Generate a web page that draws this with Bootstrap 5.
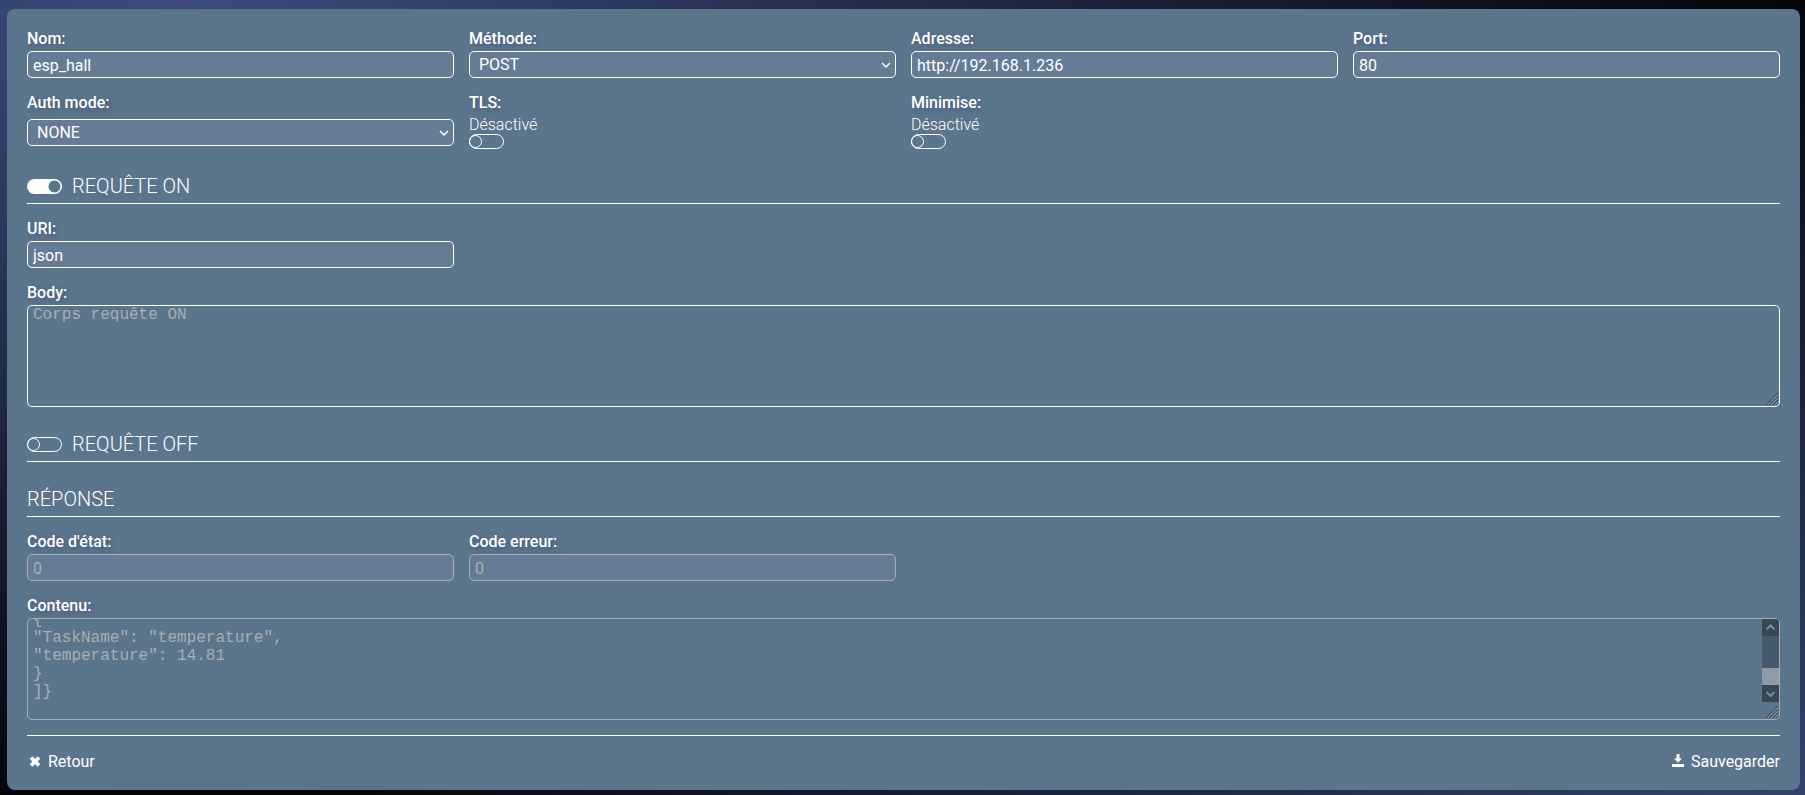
<!DOCTYPE html>
<html lang="fr">
<head>
<meta charset="utf-8">
<meta name="viewport" content="width=device-width, initial-scale=1">
<title>esp_hall</title>
<link href="https://cdn.jsdelivr.net/npm/bootstrap@5.3.0/dist/css/bootstrap.min.css" rel="stylesheet">
<style>
  :root {
    --panel: #5b758d;
    --field: #667b96;
    --muted: #aaaeb1;
  }
  body {
    min-height: 100vh;
    padding: 9px 5px 5px 7px;
    color: #fff;
    font-family: Roboto, "Liberation Sans", sans-serif;
    font-size: 16px;
    font-weight: 300;
    line-height: 18px;
    background:
      radial-gradient(ellipse 1600px 800px at 180px 0, #3c4c7e, transparent),
      radial-gradient(ellipse 1500px 800px at 1800px 100%, #34426d, transparent),
      #040508;
  }
  .panel { background: var(--panel); border-radius: 8px; padding: 20px 20px 17px; }
  .fields { --bs-gutter-x: 15px; --bs-gutter-y: 15px; }
  .field-label {
    display: block;
    line-height: 20px;
    padding-bottom: 2px;
    font-weight: 500;
    text-shadow: 2px 2px 4px rgba(60, 70, 110, .5);
  }
  .field-box {
    display: block;
    width: 100%;
    height: 27px;
    padding: 1px 5px 0;
    color: #fff;
    background-color: var(--field);
    border: 1px solid #fff;
    border-radius: 5px;
    font-weight: 400;
  }
  select.field-box {
    appearance: none;
    padding: 1px 24px 0 9px;
    background-image: url("data:image/svg+xml,%3Csvg xmlns='http://www.w3.org/2000/svg' viewBox='0 0 10 10'%3E%3Cpath d='M1 3l4 4 4-4' fill='none' stroke='white' stroke-width='1.5'/%3E%3C/svg%3E");
    background-repeat: no-repeat;
    background-position: right 4px center;
    background-size: 10px 10px;
  }
  textarea.field-box {
    height: 102px;
    padding: 0 5px;
    background-color: transparent;
    font-family: "Liberation Mono", monospace;
    line-height: 18px;
    resize: vertical;
    scrollbar-width: none;
  }
  .field-box::placeholder { color: var(--muted); opacity: 1; }
  .field-box:disabled { color: var(--muted); border-color: var(--muted); opacity: 1; }
  textarea.field-box::-webkit-resizer {
    background: center / 100% 100% no-repeat url("data:image/svg+xml,%3Csvg xmlns='http://www.w3.org/2000/svg' viewBox='0 0 17 17'%3E%3Cpath d='M2 16L16 2M6 16L16 6M10 16l6-6M14 16l2-2' stroke='%232f3d4c'/%3E%3Cpath d='M4 16L16 4M8 16l8-8M12 16l4-4' stroke='%2391a3b4'/%3E%3C/svg%3E");
  }
  /* Scroll bar laid over the right edge of the response, above the resize grip */
  .scroll-rail {
    position: absolute;
    top: 1px;
    right: 1px;
    bottom: 18px;
    width: 17px;
    background: #46596d;
    border-top-right-radius: 4px;
    overflow: hidden;
    pointer-events: none;
  }
  .scroll-rail svg { display: block; flex: none; background: #3a4656; }
  .scroll-thumb { height: 17px; background: #909ba7; }
  .state { padding-top: 1px; }
  .toggle {
    appearance: none;
    display: block;
    flex: none;
    width: 35px;
    height: 15px;
    margin: 0;
    background: center / 100% 100% no-repeat url("data:image/svg+xml,%3Csvg xmlns='http://www.w3.org/2000/svg' viewBox='0 0 35 15' fill='none' stroke='white'%3E%3Crect x='.5' y='.5' width='34' height='14' rx='7'/%3E%3Ccircle cx='6.5' cy='7.5' r='6'/%3E%3C/svg%3E");
  }
  .toggle:checked {
    background-image: url("data:image/svg+xml,%3Csvg xmlns='http://www.w3.org/2000/svg' viewBox='0 0 35 15'%3E%3Crect width='35' height='15' rx='7.5' fill='white'/%3E%3Ccircle cx='27.5' cy='7.5' r='6' fill='%235b758d'/%3E%3C/svg%3E");
  }
  .section-head {
    margin: 25px 0 15px;
    padding-bottom: 5px;
    border-bottom: 1px solid #fff;
    font-size: 20px;
    font-weight: 300;
    line-height: 24px;
  }
  .section-head .toggle { margin: 0 10px 0 0; }
  .actions { margin-top: 15px; padding-top: 15px; border-top: 1px solid #fff; }
  .action {
    gap: 5px;
    padding: 0;
    border: 0;
    background: none;
    color: #fff;
    line-height: 22px;
    font-weight: 400;
  }
</style>
</head>
<body>
<form class="panel" onsubmit="return false">
  <div class="row row-cols-4 fields">
    <div class="col">
      <label class="field-label" for="nom">Nom:</label>
      <input class="field-box" id="nom" type="text" value="esp_hall">
    </div>
    <div class="col">
      <label class="field-label" for="methode">Méthode:</label>
      <select class="field-box" id="methode"><option>GET</option><option selected>POST</option><option>PUT</option></select>
    </div>
    <div class="col">
      <label class="field-label" for="adresse">Adresse:</label>
      <input class="field-box" id="adresse" type="text" value="http://192.168.1.236">
    </div>
    <div class="col">
      <label class="field-label" for="port">Port:</label>
      <input class="field-box" id="port" type="text" value="80">
    </div>
    <div class="col">
      <label class="field-label mb-1" for="auth">Auth mode:</label>
      <select class="field-box" id="auth"><option selected>NONE</option><option>BASIC</option></select>
    </div>
    <div class="col">
      <label class="field-label" for="tls">TLS:</label>
      <div class="state">Désactivé</div>
      <input class="toggle" id="tls" type="checkbox" role="switch">
    </div>
    <div class="col">
      <label class="field-label" for="minimise">Minimise:</label>
      <div class="state">Désactivé</div>
      <input class="toggle" id="minimise" type="checkbox" role="switch">
    </div>
  </div>

  <h2 class="section-head d-flex align-items-center">
    <input class="toggle" id="req-on" type="checkbox" role="switch" checked>
    <label for="req-on">REQUÊTE ON</label>
  </h2>
  <div class="row fields">
    <div class="col-3">
      <label class="field-label" for="uri">URI:</label>
      <input class="field-box" id="uri" type="text" value="json">
    </div>
    <div class="col-12">
      <label class="field-label" for="corps">Body:</label>
      <textarea class="field-box" id="corps" placeholder="Corps requête ON"></textarea>
    </div>
  </div>

  <h2 class="section-head d-flex align-items-center">
    <input class="toggle" id="req-off" type="checkbox" role="switch">
    <label for="req-off">REQUÊTE OFF</label>
  </h2>

  <h2 class="section-head">RÉPONSE</h2>
  <div class="row fields">
    <div class="col-3">
      <label class="field-label" for="etat">Code d'état:</label>
      <input class="field-box" id="etat" type="text" value="0" disabled>
    </div>
    <div class="col-3">
      <label class="field-label" for="erreur">Code erreur:</label>
      <input class="field-box" id="erreur" type="text" value="0" disabled>
    </div>
    <div class="col-12">
      <label class="field-label" for="contenu">Contenu:</label>
      <div class="position-relative">
        <textarea class="field-box" id="contenu" disabled>
















{
"TaskName": "temperature",
"temperature": 14.81
}
]}
</textarea>
        <div class="scroll-rail d-flex flex-column" aria-hidden="true">
          <svg class="mb-auto" width="17" height="17" viewBox="0 0 17 17"><path d="M4.500 10.500l4-4 4 4" fill="none" stroke="#808a94" stroke-width="2"/></svg>
          <div class="scroll-thumb"></div>
          <svg width="17" height="17" viewBox="0 0 17 17"><path d="M4.500 7l4 4 4-4" fill="none" stroke="#808a94" stroke-width="2"/></svg>
        </div>
      </div>
    </div>
  </div>

  <div class="actions d-flex justify-content-between">
    <button class="action d-flex align-items-center" type="button">
      <svg width="16" height="16" viewBox="0 0 16 16" aria-hidden="true"><path d="M4 3.500l8 8M12 3.500l-8 8" stroke="#fff" stroke-width="3.800"/></svg>
      Retour
    </button>
    <button class="action d-flex align-items-center" type="submit">
      <svg width="16" height="16" viewBox="0 0 16 16" aria-hidden="true"><path d="M6.500 0h3v4.500H12L8 8.800 4 4.500h2.500zM2 10h12v3H2z" fill="#fff"/></svg>
      Sauvegarder
    </button>
  </div>
</form>
<script src="https://cdn.jsdelivr.net/npm/bootstrap@5.3.0/dist/js/bootstrap.bundle.min.js"></script>
<script>
  // Show the end of the response first.
  const contenu = document.getElementById('contenu');
  contenu.scrollTop = contenu.scrollHeight;
</script>
</body>
</html>
